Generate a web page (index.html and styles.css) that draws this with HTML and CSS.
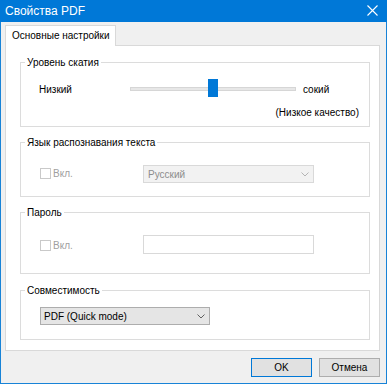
FILE: index.html
```html
<!DOCTYPE html>
<html lang="ru">
<head>
    <meta charset="UTF-8">
    <title>Свойства PDF</title>
    <link rel="stylesheet" href="styles.css">
</head>
<body>
    <div class="window">
        <div class="titlebar">
            <span class="title">Свойства PDF</span>
            <svg class="close" width="11" height="11" viewBox="0 0 11 11">
                <path d="M0.5 0.5 L10.5 10.5 M10.5 0.5 L0.5 10.5" stroke="#fff" stroke-width="1.1" fill="none"/>
            </svg>
        </div>

        <div class="body">
            <div class="tabs">
                <div class="tab active">Основные настройки</div>
            </div>

            <div class="panel">
                <!-- Compression -->
                <div class="group group-compress">
                    <div class="group-title">Уровень скатия</div>
                    <div class="slider-row">
                        <span class="slider-label">Низкий</span>
                        <div class="slider">
                            <div class="track"></div>
                            <div class="thumb"></div>
                        </div>
                        <span class="slider-end">сокий</span>
                    </div>
                    <div class="quality">(Низкое качество)</div>
                </div>

                <!-- OCR language -->
                <div class="group group-lang">
                    <div class="group-title">Язык распознавания текста</div>
                    <div class="field-row">
                        <label class="check disabled"><span class="box"></span>Вкл.</label>
                        <div class="combo disabled">
                            <span>Русский</span>
                            <svg class="chevron" width="8" height="5" viewBox="0 0 8 5"><path d="M0.5 0.5 L4 4 L7.5 0.5" stroke="#b4b4b4" fill="none"/></svg>
                        </div>
                    </div>
                </div>

                <!-- Password -->
                <div class="group group-pass">
                    <div class="group-title">Пароль</div>
                    <div class="field-row">
                        <label class="check disabled"><span class="box"></span>Вкл.</label>
                        <div class="textbox"></div>
                    </div>
                </div>

                <!-- Compatibility -->
                <div class="group group-compat">
                    <div class="group-title">Совместимость</div>
                    <div class="combo enabled">
                        <span>PDF (Quick mode)</span>
                        <svg class="chevron" width="8" height="5" viewBox="0 0 8 5"><path d="M0.5 0.5 L4 4 L7.5 0.5" stroke="#606060" fill="none"/></svg>
                    </div>
                </div>
            </div>

            <div class="buttons">
                <button class="btn default">OK</button>
                <button class="btn">Отмена</button>
            </div>
        </div>
    </div>
</body>
</html>
```

FILE: styles.css
```css
/* Reset */
* {
    margin: 0;
    padding: 0;
    box-sizing: border-box;
}

body {
    font-family: 'Liberation Sans', Arial, sans-serif;
    font-size: 10px;
    color: #000;
    background: #f0f0f0;
}

.window {
    width: 387px;
    height: 384px;
    background: #f0f0f0;
    border: 1px solid #1883d7;
    border-top: none;
    display: flex;
    flex-direction: column;
}

/* Title bar */
.titlebar {
    height: 22px;
    margin: 0 -1px;
    background: #0078d7;
    color: #fff;
    display: flex;
    align-items: center;
    justify-content: space-between;
    padding: 0 9px 1px 5px;
}

.title {
    font-size: 12px;
}

.close {
    display: block;
}

.body {
    padding: 3px 6px 0 4px;
}

/* Tabs */
.tabs {
    display: flex;
    height: 20px;
}

.tab {
    height: 21px;
    padding: 2px 5px 0 6px;
    background: #fff;
    border: 1px solid #d9d9d9;
    border-bottom: none;
    position: relative;
    z-index: 1;
    line-height: 16px;
}

.panel {
    height: 306px;
    background: #fff;
    border: 1px solid #d9d9d9;
    padding: 16px 9px 0 14px;
}

/* Group boxes */
.group {
    border: 1px solid #dcdcdc;
    margin-bottom: 15px;
}

.group-title {
    width: fit-content;
    height: 15px;
    line-height: 15px;
    margin: -8px 0 0 4px;
    padding: 0 2px;
    background: #fff;
}

.group-compress {
    height: 65px;
}

.group-lang {
    height: 55px;
}

.group-pass {
    height: 62px;
    margin-bottom: 16px;
}

.group-compat {
    height: 50px;
    margin-bottom: 0;
}

/* Slider */
.slider-row {
    display: flex;
    align-items: center;
    margin-top: 9px;
    height: 18px;
}

.slider-label {
    width: 109px;
    padding-left: 18px;
    margin-top: 3px;
}

.slider {
    width: 166px;
    height: 18px;
    position: relative;
}

.track {
    position: absolute;
    left: 0;
    right: 0;
    top: 8px;
    height: 4px;
    background: #e7e7e7;
    border: 1px solid #d6d6d6;
}

.thumb {
    position: absolute;
    left: 78px;
    top: 0;
    width: 10px;
    height: 18px;
    background: #0078d7;
}

.slider-end {
    margin-left: 7px;
    margin-top: 3px;
}

.quality {
    text-align: right;
    padding-right: 10px;
    margin-top: 8px;
    line-height: 15px;
}

/* Checkbox + fields */
.field-row {
    display: flex;
    align-items: flex-start;
    padding-left: 19px;
}

.group-lang .field-row {
    margin-top: 15px;
}

.group-pass .field-row {
    margin-top: 15px;
}

.check {
    display: flex;
    align-items: center;
    width: 103px;
    height: 15px;
    margin-top: 1px;
    line-height: 15px;
}

.group-pass .check {
    margin-top: 3px;
}

.check .box {
    width: 11px;
    height: 11px;
    border: 1px solid #c9c9c9;
    background: #fff;
    margin-right: 2px;
}

.check.disabled {
    color: #a0a0a0;
}

.combo {
    display: flex;
    align-items: center;
    justify-content: space-between;
    width: 171px;
    height: 18px;
    padding: 0 4px 0 4px;
}

.combo.disabled {
    background: #f2f2f2;
    border: 1px solid #d9d9d9;
    color: #8d8d8d;
}

.combo.enabled {
    width: 170px;
    height: 18px;
    margin: 9px 0 0 19px;
    background: #e5e5e5;
    border: 1px solid #adadad;
    padding-left: 3px;
}

.chevron {
    display: block;
}

.textbox {
    width: 171px;
    height: 19px;
    border: 1px solid #d9d9d9;
    background: #fff;
}

/* Dialog buttons */
.buttons {
    display: flex;
    justify-content: flex-end;
    gap: 7px;
    margin-top: 7px;
}

.btn {
    width: 61px;
    height: 19px;
    font-family: inherit;
    font-size: 10px;
    background: #e1e1e1;
    border: 1px solid #adadad;
    color: #000;
}

.btn.default {
    border-color: #0078d7;
}
```
